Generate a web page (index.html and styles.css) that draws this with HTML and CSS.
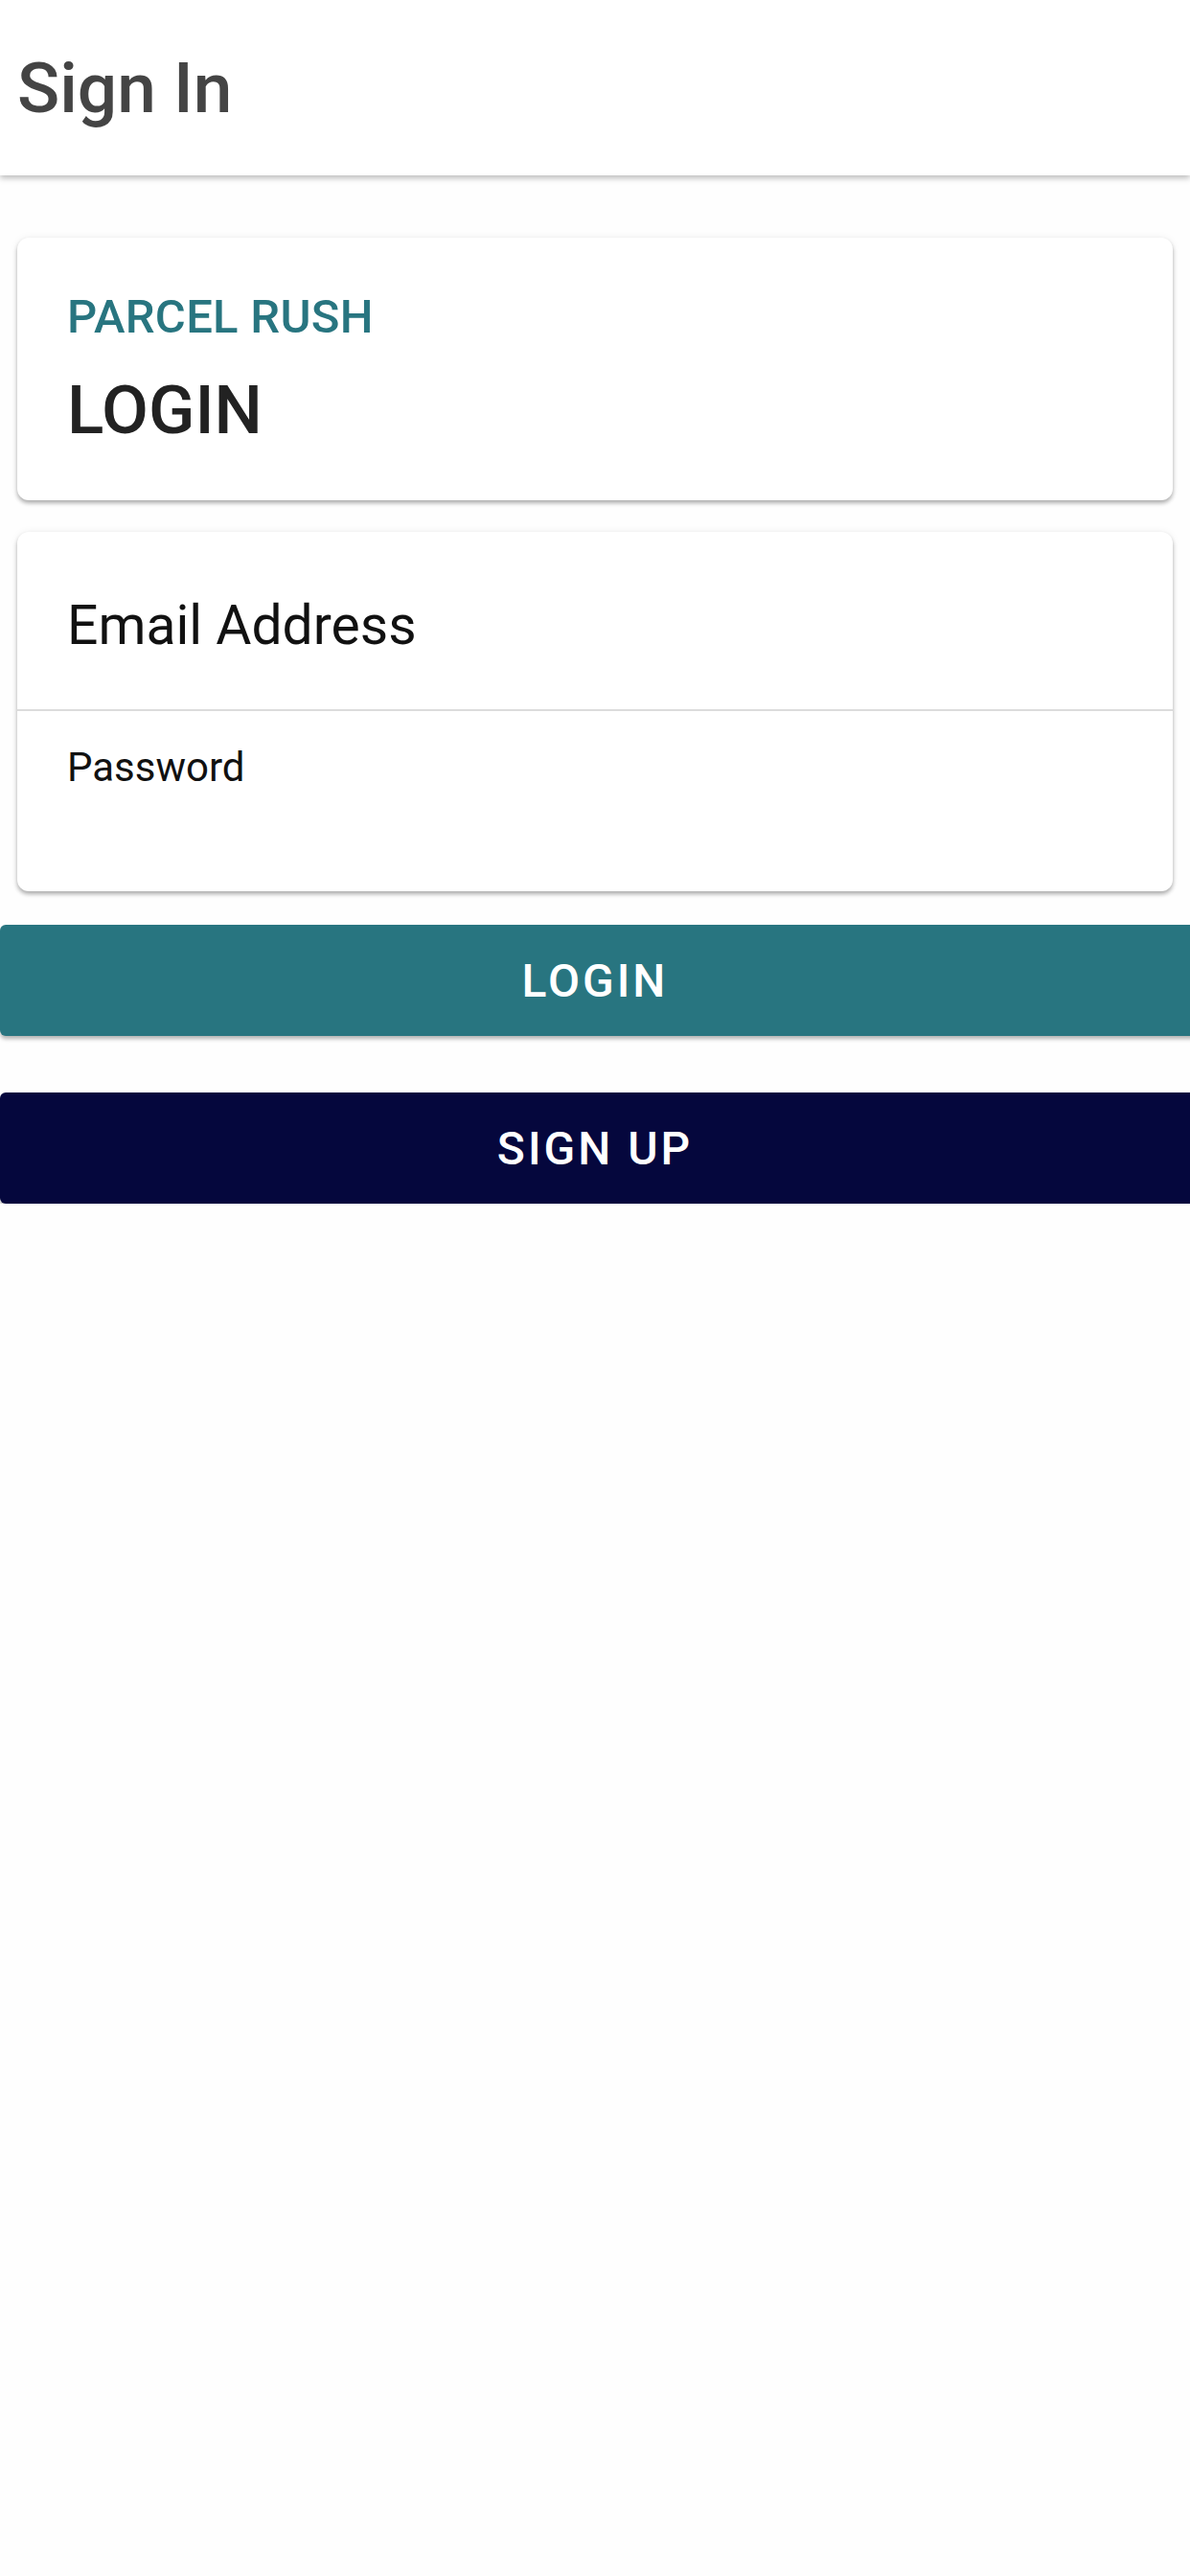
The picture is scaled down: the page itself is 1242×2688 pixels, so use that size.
FILE: index.html
```html
<!DOCTYPE html>
<html lang="en">
<head>
  <meta charset="UTF-8" />
  <title>Sign In - Parcel Rush</title>
  <meta name="viewport" content="width=device-width, initial-scale=1.0" />
  <link rel="stylesheet" href="styles.css">
</head>
<body>
  <header>
    <h1>Sign In</h1>
  </header>
  <main>
    <div class="card titulo">
      <div class="marca">PARCEL RUSH</div>
      <h2>LOGIN</h2>
    </div>
    <div class="card campos">
      <div class="campo email">Email Address</div>
      <div class="campo password">Password</div>
    </div>
  </main>
  <div class="botones">
    <button class="btn btn-login">LOGIN</button>
    <button class="btn btn-signup">SIGN UP</button>
  </div>
</body>
</html>
```

FILE: styles.css
```css
body {
  font-family: Roboto, 'Liberation Sans', sans-serif;
  margin: 0;
  background: #fefefe;
  color: #111;
  overflow-x: hidden;
}

header {
  height: 183px;
  background: white;
  display: flex;
  align-items: center;
  padding-left: 18px;
  box-shadow: 0 3px 6px rgba(0,0,0,0.26);
  position: relative;
}

header h1 {
  margin: 0;
  font-size: 73px;
  line-height: 84px;
  font-weight: 500;
  color: #444;
}

main {
  padding: 65px 18px 0;
}

.card {
  background: white;
  border-radius: 12px;
  box-shadow: 0 3px 4px rgba(0,0,0,0.3), 0 0 8px rgba(0,0,0,0.06);
}

.titulo {
  padding: 55px 52px 52px;
}

.marca {
  font-size: 49px;
  line-height: 56px;
  font-weight: 500;
  letter-spacing: 0.3px;
  color: #287580;
}

.titulo h2 {
  margin: 27px 0 0;
  font-size: 71px;
  line-height: 84px;
  font-weight: 500;
  color: #222;
}

.campos {
  margin-top: 33px;
}

.campo {
  padding-left: 52px;
  color: #111;
}

.email {
  font-size: 57px;
  line-height: 67px;
  padding-top: 64px;
  padding-bottom: 54px;
  border-bottom: 2px solid #dcdcdc;
}

.password {
  font-size: 42px;
  line-height: 50px;
  padding-top: 34px;
  padding-bottom: 104px;
}

.botones {
  padding-top: 35px;
}

.btn {
  display: block;
  width: calc(100% + 20px);
  height: 116px;
  padding: 0 20px 0 0;
  border: none;
  border-radius: 6px 0 0 6px;
  font-family: Roboto, 'Liberation Sans', sans-serif;
  font-size: 48px;
  font-weight: 500;
  letter-spacing: 3px;
  color: white;
  box-shadow: 0 3px 4px rgba(0,0,0,0.3);
  cursor: pointer;
}

.btn-login {
  background: #287580;
}

.btn-signup {
  background: #05073d;
  margin-top: 59px;
}
```
